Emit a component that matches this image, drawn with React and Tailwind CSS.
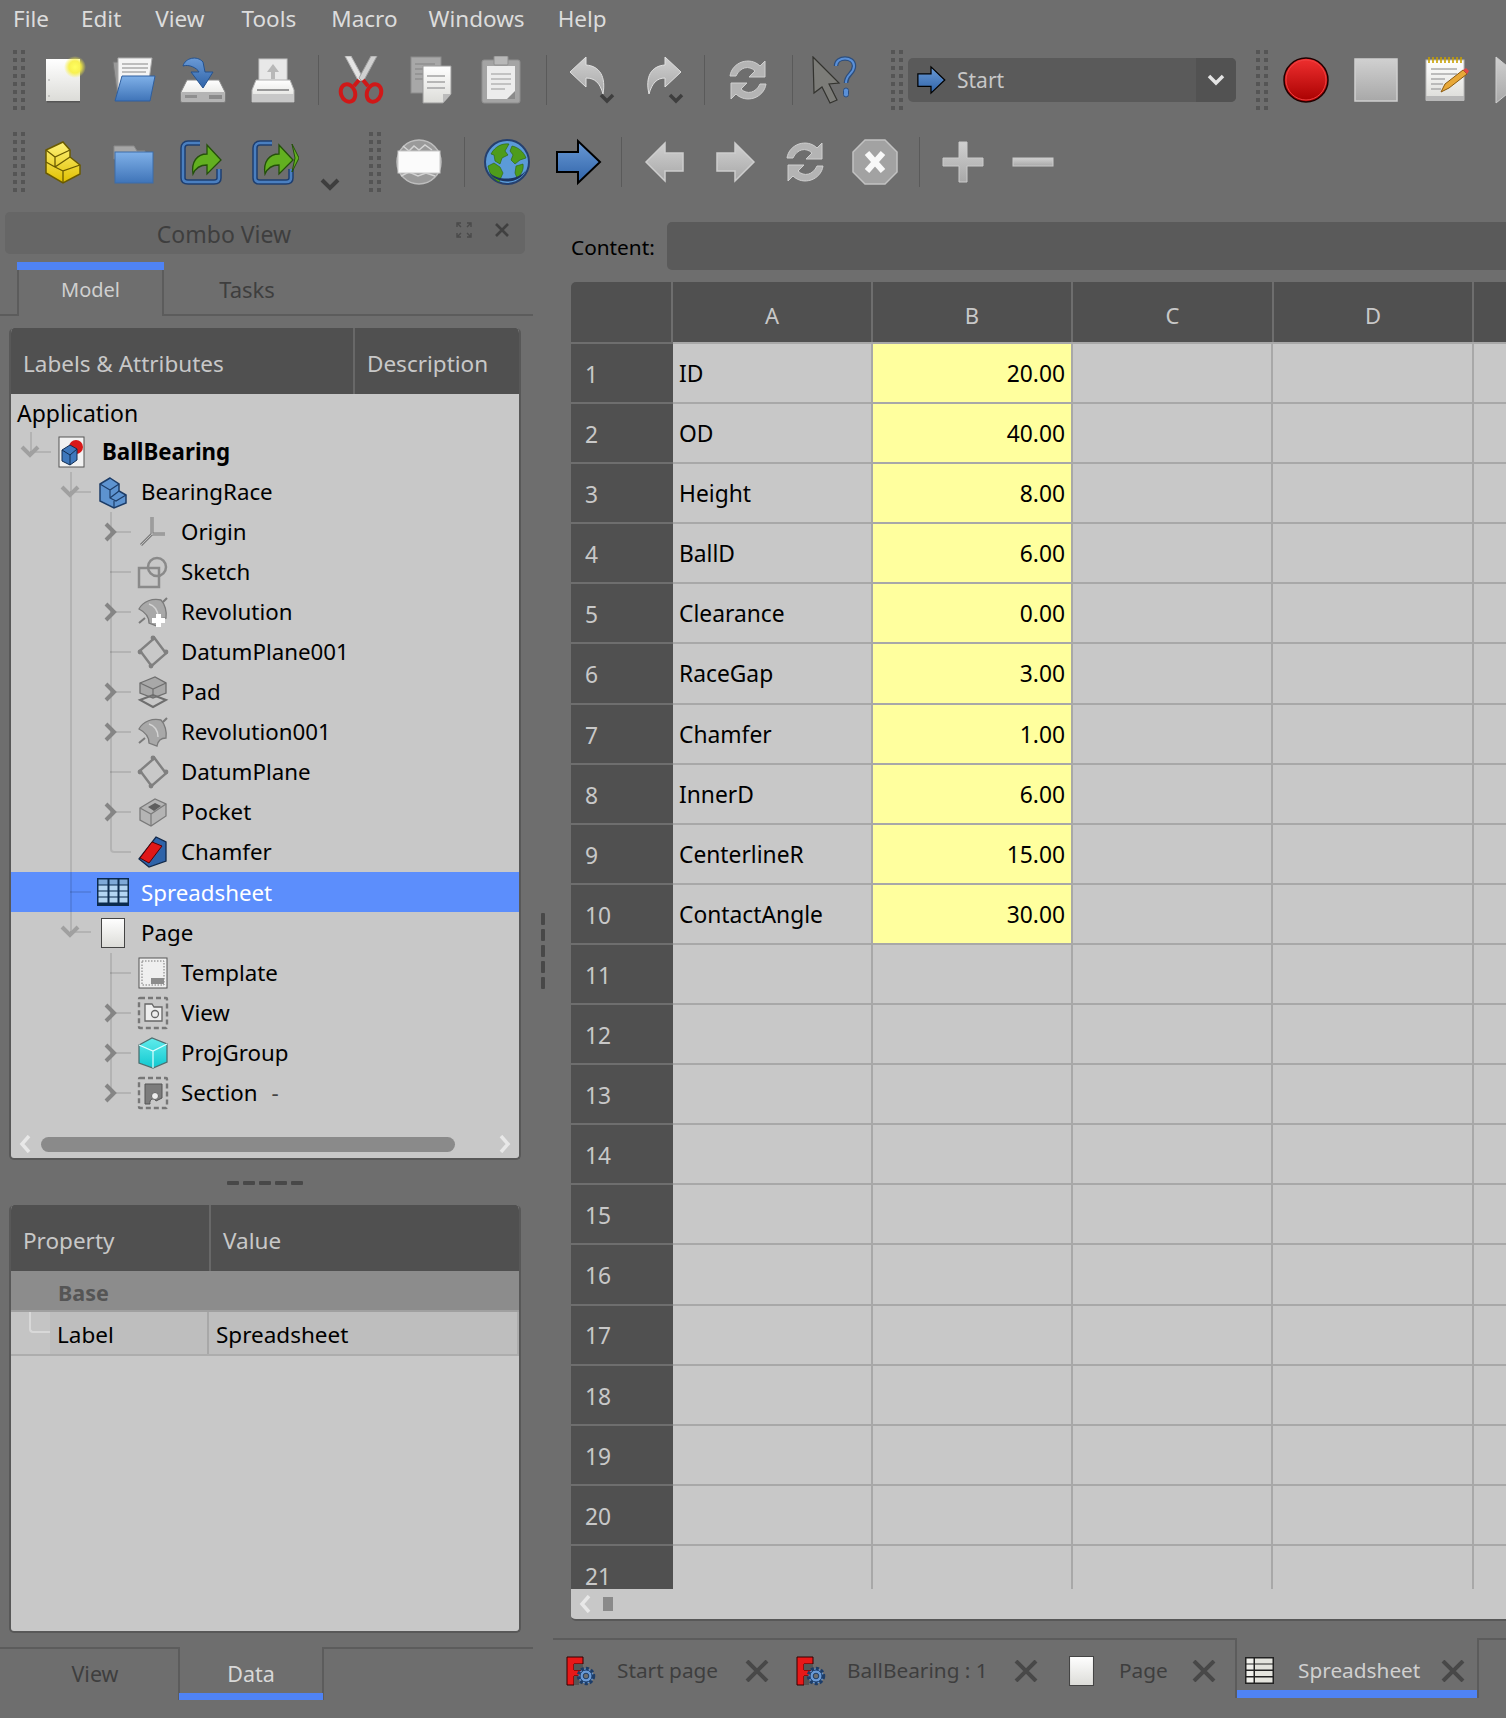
import React from "react";

const Grad = ({ id, from, to }) => (
  <linearGradient id={id} x1="0" y1="0" x2="0" y2="1">
    <stop offset="0" stopColor={from} />
    <stop offset="1" stopColor={to} />
  </linearGradient>
);

const SharedDefs = () => (
  <svg width="0" height="0" className="absolute">
    <defs>
      <Grad id="gPage" from="#ffffff" to="#dcdcd8" />
      <Grad id="gBlue" from="#7fb0e8" to="#3f74b8" />
      <Grad id="gArrow" from="#6a9ad6" to="#2f63a8" />
      <Grad id="gGray" from="#d0d0d0" to="#a8a8a8" />
      <Grad id="gRed" from="#f03030" to="#a80000" />
      <Grad id="gYellow" from="#fff27a" to="#e0c000" />
      <Grad id="gCyan" from="#60ecec" to="#10c8d0" />
      <radialGradient id="gGlow">
        <stop offset="0" stopColor="#ffff60" />
        <stop offset="0.55" stopColor="#f8f040" stopOpacity="0.9" />
        <stop offset="1" stopColor="#f8f040" stopOpacity="0" />
      </radialGradient>
    </defs>
  </svg>
);

const Svg = ({ w = 48, h = 48, children }) => (
  <svg width={w} height={h} viewBox={`0 0 ${w} ${h}`} fill="none">
    {children}
  </svg>
);

/* toolbar icons */
const NewIcon = () => (
  <Svg>
    <rect x="7" y="3" width="34" height="42" fill="url(#gPage)" />
    <circle cx="10" cy="24" r="0.8" fill="#999" />
    <circle cx="10" cy="40" r="0.8" fill="#999" />
    <rect x="8" y="45" width="33" height="1.5" fill="#555" />
    <circle cx="36" cy="11" r="11" fill="url(#gGlow)" />
  </Svg>
);
const OpenIcon = () => (
  <Svg>
    <path d="M4 6h14l2 30H8z" fill="#999" stroke="#777" />
    <path d="M9 2h34l-4 30H9z" fill="#f4f4f4" stroke="#aaa" />
    <path d="M13 8h26M13 12h26M13 16h24" stroke="#aaa" strokeWidth="1.5" />
    <path d="M13 20h33l-5 25H6z" fill="url(#gBlue)" stroke="#2f5f9f" />
  </Svg>
);
const SaveIcon = () => (
  <Svg>
    <path d="M8 24h32l6 12v10H2V36z" fill="url(#gPage)" stroke="#888" />
    <rect x="3" y="36" width="42" height="10" fill="#b4b4b4" />
    <rect x="30" y="39" width="13" height="4" fill="#8a8a8a" />
    <rect x="6" y="39" width="12" height="3" fill="#8f8f8f" />
    <path d="M4 10C6 2 18 -1 24 6l2 10h8L24 32 12 16h8C18 12 10 8 4 10z" fill="url(#gArrow)" stroke="#24528f" />
  </Svg>
);
const PrintIcon = () => (
  <Svg>
    <rect x="10" y="3" width="28" height="26" fill="#e8e8e8" stroke="#c4c4c4" />
    <path d="M24 8l6 8h-4v7h-4v-7h-4z" fill="#b8b8b8" />
    <path d="M7 24h34l4 10v12H3V34z" fill="url(#gPage)" stroke="#b0b0b0" />
    <rect x="3" y="38" width="42" height="8" fill="#c8c8c8" />
    <rect x="8" y="33" width="32" height="2" fill="#999" />
  </Svg>
);
const CutIcon = () => (
  <Svg>
    <path d="M8 0l14 26 4-4L14 0z" fill="#e4e4e4" stroke="#b0b0b0" />
    <path d="M40 0L26 26l-4-4L34 0z" fill="#d0d0d0" stroke="#a0a0a0" />
    <ellipse cx="11" cy="37" rx="7" ry="9" stroke="#d01818" strokeWidth="4" transform="rotate(-20 11 37)" />
    <ellipse cx="37" cy="37" rx="7" ry="9" stroke="#d01818" strokeWidth="4" transform="rotate(20 37 37)" />
    <path d="M22 24l-5 6M26 24l5 6" stroke="#d01818" strokeWidth="4" />
  </Svg>
);
const CopyIcon = () => (
  <Svg>
    <rect x="6" y="1" width="30" height="36" fill="#a8a8a8" stroke="#8c8c8c" />
    <path d="M10 8h20M10 13h20M10 18h20M10 23h20" stroke="#8e8e8e" strokeWidth="1.5" />
    <path d="M18 10h28v28l-8 9H18z" fill="url(#gPage)" stroke="#9a9a9a" />
    <path d="M22 20h18M22 26h18M22 32h18" stroke="#a4a4a4" strokeWidth="1.5" />
    <path d="M38 47v-9h8z" fill="#bbb" />
  </Svg>
);
const PasteIcon = () => (
  <Svg>
    <rect x="5" y="4" width="38" height="43" rx="2" fill="#a4a4a4" stroke="#8e8e8e" />
    <rect x="10" y="10" width="28" height="33" fill="#ececec" />
    <path d="M14 18h20M14 23h20M14 28h20M14 33h14" stroke="#b4b4b4" strokeWidth="1.5" />
    <rect x="17" y="0" width="14" height="9" rx="1" fill="#b8b8b8" stroke="#8e8e8e" />
    <path d="M30 43l8-8v8z" fill="#8a8a8a" />
  </Svg>
);
const UndoIcon = () => (
  <Svg>
    <path d="M2 16L18 1v8c14 1 20 12 17 29-3-11-8-16-17-16v9z" fill="url(#gGray)" stroke="#e0e0e0" />
    <path d="M33 39l6 6 6-6" stroke="#3e3e3e" strokeWidth="3.5" />
  </Svg>
);
const RedoIcon = () => (
  <Svg>
    <path d="M40 16L24 1v8C10 10 4 21 8 38c3-11 8-16 16-16v9z" fill="url(#gGray)" stroke="#e0e0e0" />
    <path d="M29 39l6 6 6-6" stroke="#3e3e3e" strokeWidth="3.5" />
  </Svg>
);
const RefreshIcon = () => (
  <Svg>
    <path d="M6 20C8 6 26 0 36 10l5-5v16H25l6-6c-6-6-15-4-19 5z" fill="#b4b4b4" stroke="#cfcfcf" />
    <path d="M42 28C40 42 22 48 12 38l-5 5V27h16l-6 6c6 6 15 4 19-5z" fill="#b4b4b4" stroke="#cfcfcf" />
  </Svg>
);
const WhatsThisIcon = () => (
  <Svg>
    <path d="M3 1l26 26-10 1 8 16-7 3-8-16-8 6z" fill="#7c7c78" stroke="#33332f" strokeWidth="1.2" />
    <path d="M26 10c0-10 18-10 18 0 0 8-8 8-8 17" stroke="#2c4e7e" strokeWidth="4.5" />
    <path d="M26 10c0-10 18-10 18 0 0 8-8 8-8 17" stroke="#5a90d8" strokeWidth="2" />
    <rect x="33.5" y="32" width="5" height="9" rx="2.5" fill="#5a90d8" stroke="#2c4e7e" />
  </Svg>
);
const BlueArrow = ({ size = 48 }) => (
  <svg width={size} height={size} viewBox="0 0 48 48" fill="none">
    <path d="M46 24L24 3v11H3v20h21v11z" fill="url(#gArrow)" stroke="#000" strokeWidth="2" />
  </svg>
);
const RecordIcon = () => (
  <Svg>
    <circle cx="24" cy="24" r="22" fill="url(#gRed)" stroke="#200000" strokeWidth="1.5" />
    <circle cx="24" cy="24" r="20" stroke="#f04040" strokeWidth="1" />
  </Svg>
);
const StopSquare = () => (
  <Svg>
    <rect x="3" y="3" width="42" height="42" fill="url(#gGray)" stroke="#cfcfcf" strokeWidth="1.5" />
  </Svg>
);
const NotepadIcon = () => (
  <Svg>
    <rect x="4" y="4" width="38" height="40" fill="url(#gPage)" stroke="#bbb" />
    <rect x="4" y="40" width="38" height="5" fill="#b8b8b8" />
    <path d="M7 1v6M11 1v6M15 1v6M19 1v6M23 1v6M27 1v6M31 1v6M35 1v6M39 1v6" stroke="#c8a000" strokeWidth="1.6" />
    <path d="M9 13h26M9 18h26M9 23h14M9 28h12M9 33h10" stroke="#aaa" strokeWidth="1.4" />
    <path d="M19 36l4-8 18-14 4 4-18 14z" fill="#e8a838" stroke="#8a5a10" />
    <path d="M41 14l4 4 2-3-3-3z" fill="#e04848" />
  </Svg>
);
const PlayCut = () => (
  <svg width="30" height="48" viewBox="0 0 30 48" fill="none">
    <path d="M1 1l28 23L1 47z" fill="url(#gGray)" stroke="#cfcfcf" />
  </svg>
);
const PartIcon = () => (
  <Svg>
    <path d="M24 4l7 8v7l10 8v9L24 45 7 35V12z" fill="url(#gYellow)" stroke="#6a5a00" strokeWidth="1.5" />
    <path d="M7 12l9 7 15-7M16 19v9M7 24l9 5 15-10M16 29v-1M24 45V33l17-6M24 33l-8-4" stroke="#6a5a00" strokeWidth="1.3" />
  </Svg>
);
const FolderIcon = () => (
  <Svg>
    <path d="M5 8h20l3 5h8v8H5z" fill="#a6a6a6" stroke="#8a8a8a" />
    <rect x="6" y="14" width="38" height="31" fill="url(#gBlue)" stroke="#3d6da8" />
  </Svg>
);
const ImportIcon = ({ double }) => (
  <Svg>
    <path d="M21 5H9c-3 0-5 2-5 5v30c0 3 2 4 5 4h26c3 0 5-1 5-4V31" stroke="#1f3f70" strokeWidth="5.5" />
    <path d="M21 5H9c-3 0-5 2-5 5v30c0 3 2 4 5 4h26c3 0 5-1 5-4V31" stroke="#4a7fc0" strokeWidth="2.5" />
    <path d="M14 36c-2-12 4-20 14-20V7l14 15-14 14v-9c-6 0-11 2-14 9z" fill="#62b020" stroke="#24500a" strokeWidth="1.3" />
    {double && <path d="M41 6l7 14-7 14 3-14z" fill="#62b020" stroke="#24500a" />}
  </Svg>
);
const Chevron = () => (
  <svg width="20" height="14" viewBox="0 0 20 14" fill="none">
    <path d="M2 3l8 8 8-8" stroke="#3e3e3e" strokeWidth="4" />
  </svg>
);
const WebIcon = () => (
  <Svg>
    <circle cx="24" cy="24" r="22" fill="#9a9a9a" stroke="#bdbdbd" strokeWidth="1.5" />
    <path d="M8 8l6 5 5-5 5 4 6-5 7 5M6 38l8-4 9 4 8-3 9 3" stroke="#d4d4d4" strokeWidth="1.5" />
    <rect x="3" y="13" width="42" height="22" fill="#fbfbfb" stroke="#c8c8c8" />
  </Svg>
);
const GlobeIcon = () => (
  <Svg>
    <circle cx="24" cy="24" r="22" fill="#5b9bd8" stroke="#26406e" strokeWidth="2" />
    <path d="M8 16c4-8 12-11 18-10l-4 7 3 4-6 3-2 6-5-3-1-6zM5 28l6-3 6 4 3 6-4 9c-6-3-10-9-11-16zM29 8c6 1 12 6 14 12l-6 2-5 4-4-4 2-5-3-4zM33 28l7-2c1 6-2 11-6 14l-2-5z" fill="#4e9c1c" stroke="#2b6208" strokeWidth="0.6" />
    <path d="M6 34c6 12 30 14 37-2-6 10-28 12-37 2z" fill="#1c3460" />
  </Svg>
);
const ArrowGray = ({ flip }) => (
  <Svg>
    <path
      d={flip ? "M5 24L24 5v10h18v18H24v10z" : "M43 24L24 5v10H6v18h18v10z"}
      fill="url(#gGray)"
      stroke="#cdcdcd"
      strokeWidth="1.5"
    />
  </Svg>
);
const OctagonIcon = () => (
  <Svg>
    <path d="M14 2h20l12 12v20L34 46H14L2 34V14z" fill="#a2a2a2" stroke="#c2c2c2" strokeWidth="1.5" />
    <path d="M16 15l16 18M32 15L16 33" stroke="#f8f8f8" strokeWidth="6" />
  </Svg>
);
const PlusIcon = () => (
  <Svg>
    <path d="M20 4h8v16h16v8H28v16h-8V28H4v-8h16z" fill="url(#gGray)" stroke="#cacaca" />
  </Svg>
);
const MinusIcon = () => (
  <Svg>
    <rect x="4" y="20" width="40" height="8" fill="url(#gGray)" stroke="#cacaca" />
  </Svg>
);

/* tree icons, 32px box */
const Ic = ({ children }) => (
  <svg width="32" height="34" viewBox="0 0 32 34" fill="none">
    {children}
  </svg>
);
const DocIcon = () => (
  <Ic>
    <rect x="2" y="2" width="25" height="30" fill="#f2f2f2" stroke="#555" />
    <circle cx="19" cy="12" r="7" fill="#d81818" />
    <path d="M5 15l8-5 7 4v11l-7 5-8-4z" fill="#3f78bc" stroke="#122c50" />
    <path d="M5 15l8 5 7-6M13 20v10" stroke="#122c50" />
  </Ic>
);
const BodyIcon = () => (
  <Ic>
    <path d="M13 3l9 6v7l7 4v8l-12 5-14-7V9z" fill="#5d93d0" stroke="#1d3d68" strokeWidth="1.5" />
    <path d="M3 9l10 6v8l6 3 10-6M17 33v-7M13 15l9-6M13 23l9-7" stroke="#1d3d68" strokeWidth="1.2" />
  </Ic>
);
const OriginIcon = () => (
  <Ic>
    <path d="M15 2v18M15 19h13M15 19L4 30" stroke="#7c7c7c" strokeWidth="3" />
    <path d="M15 2v18M15 19h13M15 19L4 30" stroke="#bdbdbd" strokeWidth="1" />
  </Ic>
);
const SketchIcon = () => (
  <Ic>
    <rect x="2" y="13" width="20" height="19" stroke="#8a8a8a" strokeWidth="2.5" />
    <circle cx="20" cy="12" r="9" stroke="#8a8a8a" strokeWidth="2.5" />
  </Ic>
);
const RevolutionIcon = ({ plus }) => (
  <Ic>
    <path d="M2 14C6 6 16 3 24 5c4 4 6 12 5 18-4 0-8 2-9 8l-8-3c0-6-4-11-10-14z" fill="#a8a8a8" stroke="#7a7a7a" strokeWidth="1.3" />
    <path d="M12 9c6 2 9 6 9 13" stroke="#d4d4d4" strokeWidth="1.5" />
    <path d="M26 7l4-4M2 28l6-5" stroke="#7a7a7a" strokeWidth="2" />
    {plus && <path d="M19 19h5v4h4v5h-4v4h-5v-4h-4v-5h4z" fill="#fff" />}
  </Ic>
);
const DatumIcon = () => (
  <Ic>
    <path d="M16 3l13 14-13 14L3 17z" stroke="#808080" strokeWidth="2.5" transform="rotate(6 16 17)" />
    <circle cx="16" cy="3" r="2.4" fill="#808080" />
    <circle cx="29" cy="17" r="2.4" fill="#808080" />
    <circle cx="14" cy="31" r="2.4" fill="#808080" />
    <circle cx="3" cy="17" r="2.4" fill="#808080" />
  </Ic>
);
const PadIcon = () => (
  <Ic>
    <path d="M3 8l15-6 11 6v10l-13 5-13-5z" fill="#a8a8a8" stroke="#6e6e6e" strokeWidth="1.3" />
    <path d="M3 8l13 6 13-6M16 14v9" stroke="#6e6e6e" strokeWidth="1.2" />
    <path d="M3 25l13-5 13 5-13 7z" stroke="#6e6e6e" strokeWidth="2" />
  </Ic>
);
const PocketIcon = () => (
  <Ic>
    <path d="M3 13l15-9 11 5v12l-15 10-11-6z" fill="#b4b4b4" stroke="#7a7a7a" strokeWidth="1.3" />
    <path d="M3 13l11 6 15-10M14 19v12" stroke="#7a7a7a" strokeWidth="1.2" />
    <path d="M11 12l7-4 6 3-7 5z" fill="#5e5e5e" />
  </Ic>
);
const ChamferIcon = () => (
  <Ic>
    <path d="M2 24L19 2l10 5v19l-17 6z" fill="#2f63a8" stroke="#12294a" strokeWidth="1.3" />
    <path d="M3 23L15 7l10 4-13 17z" fill="#e01818" stroke="#5a0000" />
  </Ic>
);
const SheetIcon = () => (
  <svg width="32" height="28" viewBox="0 0 32 28" fill="none">
    <rect width="32" height="28" fill="#0b2a4e" />
    {[1.5, 7.5, 13.5, 19.5].map((y, r) =>
      [1.5, 12.5, 22.5].map((x, c) => (
        <rect key={`${r}-${c}`} x={x} y={y} width={c === 0 ? 9 : 8} height="5" fill={r === 0 ? "#7fa9d8" : "#b3d4f2"} />
      ))
    )}
  </svg>
);
const PageIcon = ({ w = 24, h = 30 }) => (
  <svg width={w} height={h} viewBox="0 0 24 30" fill="none" preserveAspectRatio="none">
    <rect x="0.5" y="0.5" width="23" height="29" fill="url(#gPage)" stroke="#444" />
  </svg>
);
const TemplateIcon = () => (
  <Ic>
    <rect x="2" y="2" width="28" height="30" fill="#efefef" stroke="#555" />
    <rect x="5" y="5" width="22" height="24" stroke="#777" strokeDasharray="1.5 1.5" />
    <rect x="14" y="22" width="13" height="6" fill="#8c8c8c" />
  </Ic>
);
const DashedFrame = () => <rect x="2" y="2" width="28" height="30" rx="1" stroke="#777" strokeWidth="2.4" strokeDasharray="5 3" />;
const ViewIcon = () => (
  <Ic>
    <DashedFrame />
    <path d="M8 8h7l2 3h8v14H8z" fill="#eee" stroke="#666" strokeWidth="1.3" />
    <circle cx="18" cy="18" r="3.5" stroke="#666" strokeWidth="1.3" />
  </Ic>
);
const ProjGroupIcon = () => (
  <Ic>
    <path d="M2 9l13-7 15 6v18l-14 6-14-5z" fill="url(#gCyan)" stroke="#4e6f70" strokeWidth="1.3" />
    <path d="M2 9l14 6 14-7M16 15v17" stroke="#e0ffff" strokeWidth="1.2" />
  </Ic>
);
const SectionIcon = () => (
  <Ic>
    <DashedFrame />
    <path d="M8 8h17v14l-6 3c-2-4-7-2-6 3H8z" fill="#7c7c7c" stroke="#555" />
    <circle cx="18" cy="20" r="3.5" fill="#eee" stroke="#666" />
  </Ic>
);

const FcIcon = () => (
  <svg width="30" height="30" viewBox="0 0 30 30" fill="none">
    <path d="M1 1h16v7H8v6h7v6H8v9H1z" fill="#e81818" stroke="#300" />
    <path d="M8 8h9v6H8zM8 20h5v9H8z" fill="#555" />
    <circle cx="20" cy="20" r="7.5" fill="#6a9ad6" stroke="#1d3d68" strokeWidth="3.5" strokeDasharray="3 2" />
    <circle cx="20" cy="20" r="6" fill="#6a9ad6" stroke="#1d3d68" />
    <circle cx="20" cy="20" r="2.8" fill="#6e6e6e" stroke="#1d3d68" />
  </svg>
);
const TabSheetIcon = () => (
  <svg width="29" height="27" viewBox="0 0 29 27" fill="none">
    <rect width="29" height="27" fill="#222" />
    {[1.5, 7.5, 14, 20.5].map((y) => (
      <React.Fragment key={y}>
        <rect x="1.5" y={y} width="7" height="5" fill="#f0f0ec" />
        <rect x="10" y={y} width="17.5" height="5" fill="#e4e4de" />
      </React.Fragment>
    ))}
  </svg>
);
const CloseX = () => (
  <svg width="24" height="22" viewBox="0 0 24 22" fill="none">
    <path d="M2 1l20 20M22 1L2 21" stroke="#484848" strokeWidth="4" />
  </svg>
);

/* toolbar parts */
const Grip = ({ className = "" }) => (
  <div className={`w-[12px] shrink-0 grid grid-cols-2 gap-x-[4px] gap-y-[4px] ${className}`}>
    {Array.from({ length: 16 }).map((_, i) => (
      <div key={i} className="w-[4px] h-[4px] bg-[#555555]" />
    ))}
  </div>
);
const Sep = ({ className = "" }) => <div className={`w-[1px] h-[50px] shrink-0 bg-[#5a5a5a] ${className}`} />;
const Tool = ({ children, className = "" }) => (
  <div className={`w-[70px] h-[48px] shrink-0 flex items-center justify-center ${className}`}>{children}</div>
);

const menu = [
  ["File", "ml-[13px]"],
  ["Edit", "ml-[32px]"],
  ["View", "ml-[34px]"],
  ["Tools", "ml-[37px]"],
  ["Macro", "ml-[35px]"],
  ["Windows", "ml-[31px]"],
  ["Help", "ml-[33px]"],
];

/* tree */
const Guide = ({ line, stub, chev }) => (
  <div className="relative w-[40px] h-full shrink-0">
    {line === "full" && <div className="absolute left-[19px] top-0 bottom-0 w-[2px] bg-black/10" />}
    {line === "half" && <div className="absolute left-[19px] top-0 h-[20px] w-[2px] bg-black/10" />}
    {line === "corner" && (
      <div className="absolute left-[19px] top-0 h-[21px] w-[21px] border-l-2 border-b-2 border-black/10 rounded-bl-[4px]" />
    )}
    {stub && <div className="absolute left-[19px] right-0 top-[19px] h-[2px] bg-black/10" />}
    {chev === "down" && (
      <svg className="absolute left-[9px] top-[12px]" width="20" height="14" viewBox="0 0 20 14" fill="none">
        <path d="M2 3l8 8 8-8" stroke="#a0a0a0" strokeWidth="4" />
      </svg>
    )}
    {chev === "right" && (
      <svg className="absolute left-[12px] top-[10px]" width="14" height="20" viewBox="0 0 14 20" fill="none">
        <path d="M3 2l8 8-8 8" stroke="#858585" strokeWidth="4" />
      </svg>
    )}
  </div>
);

const Leaf = ({ name, icon, chev, line = "full", last, outer = "full", extra }) => (
  <div className="flex items-center h-[40px]">
    <div className="w-[40px] shrink-0" />
    <Guide line={outer} />
    <Guide line={last ? "corner" : line} stub={!last} chev={chev} />
    <div className="w-[44px] shrink-0 flex items-center justify-center">{icon}</div>
    <span className="ml-[6px]">{name}</span>
    {extra && <span className="ml-[14px] text-[#444444]">{extra}</span>}
  </div>
);

const Tree = () => (
  <div className="flex-1 text-[22.3px] text-black leading-none">
    <div className="h-[38px] flex items-center pl-[6px] text-[23px]">Application</div>
    <div className="flex items-center h-[40px]">
      <Guide line="half" stub chev="down" />
      <div className="w-[44px] shrink-0 flex items-center justify-center"><DocIcon /></div>
      <span className="ml-[7px] font-bold">BallBearing</span>
    </div>
    <div className="flex items-center h-[40px]">
      <div className="w-[40px] shrink-0" />
      <Guide line="full" stub chev="down" />
      <div className="w-[44px] shrink-0 flex items-center justify-center"><BodyIcon /></div>
      <span className="ml-[6px]">BearingRace</span>
    </div>
    <Leaf name="Origin" icon={<OriginIcon />} chev="right" />
    <Leaf name="Sketch" icon={<SketchIcon />} />
    <Leaf name="Revolution" icon={<RevolutionIcon plus />} chev="right" />
    <Leaf name="DatumPlane001" icon={<DatumIcon />} />
    <Leaf name="Pad" icon={<PadIcon />} chev="right" />
    <Leaf name="Revolution001" icon={<RevolutionIcon />} chev="right" />
    <Leaf name="DatumPlane" icon={<DatumIcon />} />
    <Leaf name="Pocket" icon={<PocketIcon />} chev="right" />
    <Leaf name="Chamfer" icon={<ChamferIcon />} last />
    <div className="flex items-center h-[40px] bg-[#5c8efc] text-white">
      <div className="w-[40px] shrink-0" />
      <Guide line="full" stub />
      <div className="w-[44px] shrink-0 flex items-center justify-center"><SheetIcon /></div>
      <span className="ml-[6px] pt-[2px]">Spreadsheet</span>
    </div>
    <div className="flex items-center h-[41px]">
      <div className="w-[40px] shrink-0" />
      <Guide line="half" stub chev="down" />
      <div className="w-[44px] shrink-0 flex items-center justify-center"><PageIcon /></div>
      <span className="ml-[6px] pt-[2px]">Page</span>
    </div>
    <Leaf name="Template" icon={<TemplateIcon />} outer="none" />
    <Leaf name="View" icon={<ViewIcon />} chev="right" outer="none" />
    <Leaf name="ProjGroup" icon={<ProjGroupIcon />} chev="right" outer="none" />
    <Leaf name="Section" icon={<SectionIcon />} chev="right" line="half" outer="none" extra="-" />
  </div>
);

/* sheet */
const cells = [
  ["ID", "20.00"],
  ["OD", "40.00"],
  ["Height", "8.00"],
  ["BallD", "6.00"],
  ["Clearance", "0.00"],
  ["RaceGap", "3.00"],
  ["Chamfer", "1.00"],
  ["InnerD", "6.00"],
  ["CenterlineR", "15.00"],
  ["ContactAngle", "30.00"],
];
const rows = Array.from({ length: 21 }, (_, i) => i + 1);

const HeadCell = ({ children, className = "" }) => (
  <div className={`h-full shrink-0 flex items-center justify-center border-l-2 border-[#6e6e6e] pt-[6px] ${className}`}>
    {children}
  </div>
);

const SheetRow = ({ n }) => {
  const cell = cells[n - 1];
  return (
    <div className="flex h-[60.1px] shrink-0 text-[22.8px]">
      <div className="w-[102px] shrink-0 bg-[#505050] text-[#c8c8c8] border-t-2 border-[#6e6e6e] pl-[14px] flex items-center">
        <span className="translate-y-[2px]">{n}</span>
      </div>
      <div className="w-[200px] shrink-0 bg-[#c8c8c8] border-t-2 border-r-2 border-[#a8a8a8] pl-[6px] pt-[2px] flex items-center text-black">{cell && cell[0]}</div>
      <div className={`w-[200px] shrink-0 border-t-2 border-r-2 border-[#a8a8a8] pr-[6px] pt-[2px] flex items-center justify-end text-black ${cell ? "bg-[#ffff9e]" : "bg-[#c8c8c8]"}`}>
        {cell && cell[1]}
      </div>
      <div className="w-[200px] shrink-0 bg-[#c8c8c8] border-t-2 border-r-2 border-[#a8a8a8]" />
      <div className="w-[201px] shrink-0 bg-[#c8c8c8] border-t-2 border-r-2 border-[#a8a8a8]" />
      <div className="flex-1 bg-[#c8c8c8] border-t-2 border-[#a8a8a8]" />
    </div>
  );
};

const DocTab = ({ className, icon, name, nameClass, active, closeClass }) => (
  <div className={`h-full shrink-0 flex items-center ${className}`}>
    {icon}
    <span className={`text-[20.8px] whitespace-nowrap ${nameClass} ${active ? "text-[#d0d0d0]" : "text-[#3e3e3e]"}`}>{name}</span>
    <div className={`ml-auto ${closeClass}`}><CloseX /></div>
  </div>
);

export default function App() {
  return (
    <div className="w-[1506px] h-[1718px] overflow-hidden bg-[#6e6e6e] font-['Noto_Sans',sans-serif] flex flex-col relative">
      <SharedDefs />

      {/* Menu bar */}
      <div className="h-[38px] shrink-0 flex items-center text-[22.5px] text-[#dcdcdc]">
        {menu.map(([m, c]) => (
          <span key={m} className={c}>{m}</span>
        ))}
      </div>

      {/* Toolbar 1 */}
      <div className="h-[84px] shrink-0 flex items-center">
        <Grip className="ml-[13px]" />
        <Tool className="ml-[3px]"><NewIcon /></Tool>
        <Tool><OpenIcon /></Tool>
        <Tool><SaveIcon /></Tool>
        <Tool><PrintIcon /></Tool>
        <Sep className="ml-[10px]" />
        <Tool className="ml-[7px]"><CutIcon /></Tool>
        <Tool className="-ml-[2px]"><CopyIcon /></Tool>
        <Tool className="ml-[2px]"><PasteIcon /></Tool>
        <Sep className="ml-[10px]" />
        <Tool className="ml-[10px]"><UndoIcon /></Tool>
        <Tool className="ml-[3px]"><RedoIcon /></Tool>
        <Sep className="ml-[4px]" />
        <Tool className="ml-[8px]"><RefreshIcon /></Tool>
        <Sep className="ml-[9px]" />
        <Tool className="ml-[6px]"><WhatsThisIcon /></Tool>
        <Grip className="ml-[22px]" />
        <div className="ml-[5px] w-[328px] h-[44px] shrink-0 rounded-[5px] bg-[#5a5a5a] flex items-center overflow-hidden">
          <div className="ml-[8px]"><BlueArrow size={30} /></div>
          <span className="ml-[11px] pt-[2px] text-[21px] text-[#c8c8c8]">Start</span>
          <div className="ml-auto w-[40px] h-full bg-[#525252] flex items-center justify-center">
            <svg width="18" height="12" viewBox="0 0 18 12" fill="none">
              <path d="M2 2l7 7 7-7" stroke="#e4e4e4" strokeWidth="3.5" />
            </svg>
          </div>
        </div>
        <Grip className="ml-[20px]" />
        <Tool className="ml-[3px]"><RecordIcon /></Tool>
        <Tool><StopSquare /></Tool>
        <Tool><NotepadIcon /></Tool>
        <div className="ml-[14px] shrink-0"><PlayCut /></div>
      </div>

      {/* Toolbar 2 */}
      <div className="h-[80px] shrink-0 flex items-center">
        <Grip className="ml-[13px]" />
        <Tool className="ml-[3px]"><PartIcon /></Tool>
        <Tool><FolderIcon /></Tool>
        <Tool><ImportIcon /></Tool>
        <Tool className="ml-[2px]"><ImportIcon double /></Tool>
        <div className="ml-[10px] w-[20px] shrink-0 self-end mb-[11px]"><Chevron /></div>
        <Grip className="ml-[29px]" />
        <Tool className="ml-[3px]"><WebIcon /></Tool>
        <Sep className="ml-[10px]" />
        <Tool className="ml-[7px]"><GlobeIcon /></Tool>
        <Tool className="ml-[1px]"><BlueArrow /></Tool>
        <Sep className="ml-[8px]" />
        <Tool className="ml-[8px]"><ArrowGray flip /></Tool>
        <Tool><ArrowGray /></Tool>
        <Tool><RefreshIcon /></Tool>
        <Tool><OctagonIcon /></Tool>
        <Sep className="ml-[9px]" />
        <Tool className="ml-[8px]"><PlusIcon /></Tool>
        <Tool><MinusIcon /></Tool>
      </div>

      <div className="flex flex-1 min-h-0">
        {/* Left dock */}
        <div className="w-[533px] shrink-0 h-[1498px] pt-[10px] flex flex-col">
          <div className="ml-[5px] w-[520px] h-[42px] shrink-0 rounded-[5px] bg-[#666666] relative flex items-center justify-center pr-[82px] pt-[3px] text-[23px] text-[#3e3e3e]">
            Combo View
            <div className="absolute right-[15px] top-[10px] flex items-center gap-[22px]">
              <svg width="16" height="16" viewBox="0 0 16 16" fill="none">
                <path d="M1 5V1h4M11 1h4v4M15 11v4h-4M5 15H1v-4M2 2l3 3M14 2l-3 3M14 14l-3-3M2 14l3-3" stroke="#4a4a4a" strokeWidth="1.4" />
              </svg>
              <svg width="16" height="16" viewBox="0 0 16 16" fill="none">
                <path d="M2 2l12 12M14 2L2 14" stroke="#404040" strokeWidth="2.6" />
              </svg>
            </div>
          </div>

          {/* Model / Tasks tabs */}
          <div className="mt-[8px] h-[54px] shrink-0 flex border-b-2 border-[#5c5c5c] text-[22px]">
            <div className="ml-[17px] w-[147px] h-[54px] border-x-2 border-[#5c5c5c] bg-[#6e6e6e] flex flex-col">
              <div className="h-[8px] bg-[#4f83f5] -mx-[2px]" />
              <div className="flex-1 flex items-center justify-center text-[#d0d0d0] text-[20px] pb-[6px]">Model</div>
            </div>
            <div className="w-[166px] flex items-center justify-center pt-[2px] text-[#3e3e3e]">Tasks</div>
          </div>

          {/* Tree panel */}
          <div className="mt-[12px] ml-[9px] w-[512px] h-[832px] shrink-0 rounded-[5px] overflow-hidden border-x-2 border-b-2 border-[#585858] bg-[#c8c8c8] flex flex-col">
            <div className="h-[66px] shrink-0 bg-[#505050] flex text-[22.5px] text-[#c8c8c8]">
              <div className="w-[342px] h-full shrink-0 flex items-center pl-[12px] pt-[6px]">Labels &amp; Attributes</div>
              <div className="h-full flex items-center pt-[6px] border-l-2 border-[#686868] pl-[12px]">Description</div>
            </div>
            <Tree />
            <div className="h-[30px] shrink-0 flex items-center pt-[2px]">
              <svg className="ml-[8px]" width="12" height="18" viewBox="0 0 12 18" fill="none">
                <path d="M10 1L3 9l7 8" stroke="#e8e8e8" strokeWidth="3.5" />
              </svg>
              <div className="ml-[10px] w-[414px] h-[15px] rounded-full bg-[#8a8a8a]" />
              <svg className="ml-[44px]" width="12" height="18" viewBox="0 0 12 18" fill="none">
                <path d="M2 1l7 8-7 8" stroke="#e8e8e8" strokeWidth="3.5" />
              </svg>
            </div>
          </div>

          {/* Splitter */}
          <div className="h-[45px] shrink-0 flex items-center justify-center gap-[4px] pr-[4px]">
            {[0, 1, 2, 3, 4].map((i) => (
              <div key={i} className="w-[12px] h-[4px] bg-[#484848] rounded-[1px]" />
            ))}
          </div>

          {/* Property panel */}
          <div className="ml-[9px] w-[512px] h-[428px] shrink-0 rounded-[5px] overflow-hidden border-x-2 border-b-2 border-[#585858] bg-[#c8c8c8] flex flex-col">
            <div className="h-[66px] shrink-0 bg-[#505050] flex text-[22.5px] text-[#c8c8c8]">
              <div className="w-[198px] h-full shrink-0 flex items-center pl-[12px] pt-[6px]">Property</div>
              <div className="h-full flex items-center border-l-2 border-[#686868] pl-[12px] pt-[6px]">Value</div>
            </div>
            <div className="h-[41px] shrink-0 bg-[#8c8c8c] flex items-center pl-[47px] pt-[6px] text-[21.5px] font-bold text-[#555555] border-b-2 border-[#a0a0a0]">
              Base
            </div>
            <div className="h-[44px] shrink-0 flex text-[22.5px] text-black border-b-2 border-[#adadad]">
              <div className="w-[39px] shrink-0 bg-[#c4c4c4] relative">
                <div className="absolute left-[18px] top-0 w-[21px] h-[21px] border-l-2 border-b-2 border-[#d8d8d8] rounded-bl-[4px]" />
              </div>
              <div className="w-[159px] shrink-0 bg-[#bebebe] border-r-2 border-[#a8a8a8] flex items-center pl-[7px] pt-[3px]">Label</div>
              <div className="flex-1 bg-[#bebebe] border-r-2 border-[#adadad] flex items-center pl-[7px] pt-[3px]">Spreadsheet</div>
            </div>
          </div>

          {/* View / Data tabs */}
          <div className="mt-[14px] h-[53px] shrink-0 flex border-t-2 border-[#5c5c5c] text-[21.5px]">
            <div className="w-[178px] h-full flex items-center justify-center pl-[12px] text-[#3e3e3e] pb-[1px]">View</div>
            <div className="w-[146px] h-[53px] -mt-[2px] border-x-2 border-[#5c5c5c] bg-[#6e6e6e] flex flex-col">
              <div className="flex-1 flex items-center justify-center text-[#d8d8d8] pt-[8px]">Data</div>
              <div className="h-[7px] bg-[#4f83f5] -mx-[1px]" />
            </div>
          </div>
        </div>

        {/* Vertical splitter */}
        <div className="w-[20px] shrink-0 h-[1498px] flex flex-col items-center justify-center gap-[4px]">
          {[0, 1, 2, 3, 4].map((i) => (
            <div key={i} className="w-[4px] h-[12px] bg-[#484848] rounded-[1px]" />
          ))}
        </div>

        {/* Right side */}
        <div className="w-[953px] shrink-0 h-[1498px] pt-[20px] flex flex-col">
          <div className="pl-[18px] h-[48px] shrink-0 flex items-center text-[20.8px] text-black">
            <div className="w-[96px] shrink-0 pt-[4px]">Content:</div>
            <div className="flex-1 h-full bg-[#5a5a5a] rounded-l-[5px]" />
          </div>

          <div className="ml-[18px] mt-[12px] h-[1339px] shrink-0 rounded-bl-[5px] rounded-tl-[5px] overflow-hidden border-b-2 border-[#585858] flex flex-col">
            <div className="h-[1307px] shrink-0 overflow-hidden flex flex-col">
              <div className="h-[60px] shrink-0 flex bg-[#505050] text-[22px] text-[#c8c8c8]">
                <div className="w-[100px] shrink-0" />
                <HeadCell className="w-[200px]">A</HeadCell>
                <HeadCell className="w-[200px]">B</HeadCell>
                <HeadCell className="w-[201px]">C</HeadCell>
                <HeadCell className="w-[200px]">D</HeadCell>
                <HeadCell className="flex-1" />
              </div>
              {rows.map((n) => (
                <SheetRow key={n} n={n} />
              ))}
            </div>
            <div className="flex-1 bg-[#c8c8c8] flex items-center">
              <svg className="ml-[8px]" width="12" height="18" viewBox="0 0 12 18" fill="none">
                <path d="M10 1L3 9l7 8" stroke="#e8e8e8" strokeWidth="3.5" />
              </svg>
              <div className="ml-[12px] w-[10px] h-[14px] bg-[#8a8a8a]" />
            </div>
          </div>

          {/* Document tabs */}
          <div className="mt-[17px] h-[62px] shrink-0 flex">
            <div className="flex-1 flex border-t-2 border-[#5c5c5c] h-[60px]">
              <DocTab className="w-[233px] pl-[13px] pt-[3px]" icon={<FcIcon />} name="Start page" nameClass="ml-[21px]" closeClass="mr-[17px]" />
              <DocTab className="w-[262px] pl-[10px] pt-[3px]" icon={<FcIcon />} name="BallBearing : 1" nameClass="ml-[21px]" closeClass="mr-[10px]" />
              <DocTab className="w-[187px] pl-[21px] pt-[3px]" icon={<PageIcon w={25} h={30} />} name="Page" nameClass="ml-[25px]" closeClass="mr-[19px]" />
            </div>
            <div className="w-[244px] h-[60px] shrink-0 border-x-2 border-[#5c5c5c] flex flex-col">
              <DocTab className="flex-1 pl-[8px] pt-[13px]" icon={<TabSheetIcon />} name="Spreadsheet" nameClass="ml-[24px]" active closeClass="mr-[12px]" />
              <div className="h-[8px] bg-[#4f83f5] shrink-0" />
            </div>
            <div className="flex-1 border-t-2 border-[#5c5c5c] h-[60px]" />
          </div>
        </div>
      </div>
    </div>
  );
}
